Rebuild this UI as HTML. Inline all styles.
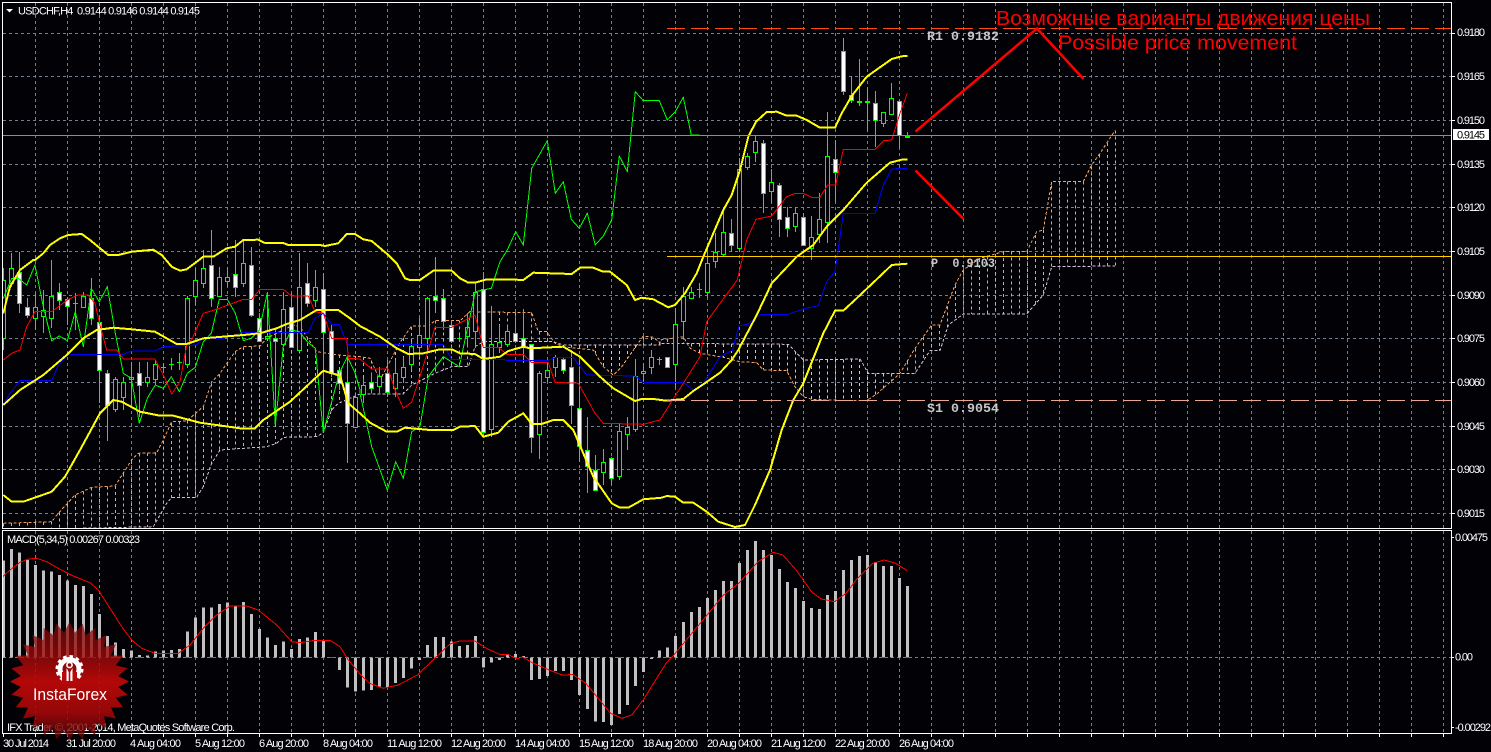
<!DOCTYPE html>
<html><head><meta charset="utf-8"><style>
html,body{margin:0;padding:0;background:#010106;width:1491px;height:752px;overflow:hidden}
svg{display:block}
text{font-family:"Liberation Sans",sans-serif;font-size:11px;fill:#fff}
.m{font-family:"Liberation Mono",monospace;font-size:12.5px;font-weight:bold;fill:#c8c8c8}
.r{font-size:20px;fill:#f00}
</style></head><body>
<svg id="s" xmlns="http://www.w3.org/2000/svg" width="1491" height="752" viewBox="0 0 1491 752">
<defs>
<clipPath id="cm"><rect x="3" y="3" width="1448" height="525"/></clipPath>
<clipPath id="cd"><rect x="3" y="531" width="1448" height="203"/></clipPath>
<linearGradient id="sg" x1="0" y1="0" x2="0" y2="1">
<stop offset="0" stop-color="#7a0808" stop-opacity=".72"/>
<stop offset=".3" stop-color="#a00a0a" stop-opacity=".8"/>
<stop offset=".5" stop-color="#c00808" stop-opacity=".93"/>
<stop offset=".75" stop-color="#a80808" stop-opacity=".9"/>
<stop offset="1" stop-color="#5e0606" stop-opacity=".72"/>
</linearGradient>
</defs>
<rect width="1491" height="752" fill="#010106"/>
<g id="grid" shape-rendering="crispEdges"></g>
<g id="main" clip-path="url(#cm)" shape-rendering="crispEdges"></g>
<g id="macd" clip-path="url(#cd)" shape-rendering="crispEdges"></g>
<g fill="none" stroke="#fff" shape-rendering="crispEdges">
<rect x="2.5" y="2.5" width="1449" height="526"/>
<rect x="2.5" y="530.5" width="1449" height="203"/>
</g>
<g id="ticks" shape-rendering="crispEdges" stroke="#fff"></g>

<polygon points="6,9 13,9 9.5,12.5" fill="#fff"/>
<text x="18" y="14.5" textLength="182" xml:space="preserve">USDCHF,H4  0.9144 0.9146 0.9144 0.9145</text>
<text x="7" y="543" textLength="133">MACD(5,34,5) 0.00267 0.00323</text>
<text x="7" y="731" textLength="228">IFX Trader, ©, 2001-2014, MetaQuotes Software Corp.</text>

<g id="seal"></g>
<g>
<circle cx="69.5" cy="669" r="9.5" fill="none" stroke="#fff" stroke-width="5"/>
<circle cx="69.5" cy="669" r="12.5" fill="none" stroke="#fff" stroke-width="3" stroke-dasharray="3.5 3"/>
<rect x="62" y="672" width="15" height="12" fill="#b80808"/>
<circle cx="69.5" cy="665" r="2.6" fill="none" stroke="#fff" stroke-width="1.6"/>
<path d="M66.5 668v13h2.2v-9zM72.5 668v13h-2.2v-9z" fill="#fff"/>
<text x="33" y="700" style="font-size:16.5px" textLength="74" lengthAdjust="spacingAndGlyphs">InstaForex</text>
</g>

<text x="1457" y="36" textLength="28">0.9180</text>
<text x="1457" y="80" textLength="28">0.9165</text>
<text x="1457" y="124" textLength="28">0.9150</text>
<text x="1457" y="168" textLength="28">0.9135</text>
<text x="1457" y="211" textLength="28">0.9120</text>
<text x="1457" y="255" textLength="28">0.9105</text>
<text x="1457" y="299" textLength="28">0.9090</text>
<text x="1457" y="342" textLength="28">0.9075</text>
<text x="1457" y="386" textLength="28">0.9060</text>
<text x="1457" y="430" textLength="28">0.9045</text>
<text x="1457" y="473" textLength="28">0.9030</text>
<text x="1457" y="517" textLength="28">0.9015</text>
<rect x="1453" y="129" width="36" height="11" fill="#fff"/>
<text x="1457" y="138.5" textLength="28" style="fill:#000">0.9145</text>
<text x="1455" y="541" textLength="33">0.00475</text>
<text x="1455" y="660.5" textLength="18">0.00</text>
<text x="1455" y="731" textLength="36">-0.00292</text>

<text x="3" y="747" textLength="46">30 Jul 2014</text>
<text x="66" y="747" textLength="50">31 Jul 20:00</text>
<text x="130" y="747" textLength="51">4 Aug 04:00</text>
<text x="195" y="747" textLength="50">5 Aug 12:00</text>
<text x="259" y="747" textLength="50">6 Aug 20:00</text>
<text x="323" y="747" textLength="50">8 Aug 04:00</text>
<text x="387" y="747" textLength="55">11 Aug 12:00</text>
<text x="451" y="747" textLength="55">12 Aug 20:00</text>
<text x="515" y="747" textLength="55">14 Aug 04:00</text>
<text x="579" y="747" textLength="55">15 Aug 12:00</text>
<text x="643" y="747" textLength="55">18 Aug 20:00</text>
<text x="707" y="747" textLength="55">20 Aug 04:00</text>
<text x="771" y="747" textLength="55">21 Aug 12:00</text>
<text x="835" y="747" textLength="55">22 Aug 20:00</text>
<text x="899" y="747" textLength="55">26 Aug 04:00</text>

<text class="m" x="927" y="40" textLength="72" lengthAdjust="spacingAndGlyphs" xml:space="preserve">R1 0.9182</text>
<text class="m" x="931" y="267" textLength="64" lengthAdjust="spacingAndGlyphs" xml:space="preserve">P  0.9103</text>
<text class="m" x="927" y="412" textLength="72" lengthAdjust="spacingAndGlyphs" xml:space="preserve">S1 0.9054</text>
<text class="r" x="996" y="25" textLength="374" lengthAdjust="spacingAndGlyphs">Возможные варианты движения цены</text>
<text class="r" x="1058" y="49.5" textLength="239" lengthAdjust="spacingAndGlyphs">Possible price movement</text>
<g fill="none" stroke="#f00" stroke-width="2.5">
<polyline points="915.5,131.5 1037,28.5 1083.5,79"/>
<line x1="915.5" y1="170.5" x2="963.5" y2="219"/>
</g>
</svg>
<script>
(function(){
var NS="http://www.w3.org/2000/svg";
function el(p,n,a){var e=document.createElementNS(NS,n);for(var k in a)e.setAttribute(k,a[k]);document.getElementById(p).appendChild(e);return e}
var GC="#708090",GD="3 3";
// grid
var i,k,x,y;
[33,76,120,164,207,251,295,338,382,426,469,513].forEach(function(y){
 el("grid","line",{x1:3,x2:1451,y1:y+.5,y2:y+.5,stroke:GC,"stroke-dasharray":GD});
 el("ticks","line",{x1:1452,x2:1455,y1:y+.5,y2:y+.5});
});
for(x=35;x<=1443;x+=32){
 el("grid","line",{x1:x+.5,x2:x+.5,y1:3,y2:528,stroke:GC,"stroke-dasharray":GD});
 el("grid","line",{x1:x+.5,x2:x+.5,y1:531,y2:733,stroke:GC,"stroke-dasharray":GD});
}
el("grid","line",{x1:3,x2:1451,y1:657.5,y2:657.5,stroke:GC,"stroke-dasharray":GD});
[537,657,727].forEach(function(y){el("ticks","line",{x1:1452,x2:1454,y1:y+.5,y2:y+.5})});
for(x=3;x<=1443;x+=32){el("ticks","line",{x1:x+.5,x2:x+.5,y1:734,y2:737})}

function Z(x0,y0,sx,a){var r=[];for(var i=0;i<a.length;i+=2)r.push([x0+a[i]/sx,y0+a[i+1]/3]);return r}
function PL(p,pts,c,w,d){var o={points:pts.map(function(q){return q[0].toFixed(1)+","+q[1].toFixed(1)}).join(" "),fill:"none",stroke:c,"stroke-width":w||1};if(d)o["stroke-dasharray"]=d;return el(p,"polyline",o)}
function itp(P,x){for(var i=1;i<P.length;i++){if(x<=P[i][0]){var a=P[i-1],b=P[i];if(b[0]==a[0])return b[1];return a[1]+(b[1]-a[1])*(x-a[0])/(b[0]-a[0])}}return null}

// Ichimoku
var A=[].concat(
Z(0,250,3,[10,820,155,815,175,790,225,735,275,712,345,708,395,630,415,610,470,608,490,570,515,515,560,513,610,470,635,395,660,370,705,305,730,290,780,288,800,265,880,225,900,230,950,305,1018,315,1080,320]),
Z(360,250,3,[30,325,60,390,100,315,125,270,155,228,205,228,225,212,300,212,330,185,515,188,535,245,560,245,585,280,610,290,650,295,700,300,730,350,760,375,785,350,850,258,880,262,900,278]),
Z(660,240,3,[0,300,70,290,90,325,120,340,190,352,240,365,290,368,310,390,380,392,405,440,430,470,455,478,570,482,620,482,650,462,720,400,765,325,790,290,815,255,840,255,885,135,910,90,960,55,1030,35]),
Z(660,10,3,[1100,725,1130,665,1150,660,1175,515,1270,515,1295,465,1320,430,1365,362]));
var B=[].concat(
Z(0,250,3,[10,840,460,830,500,760,515,742,590,742,610,710,635,640,660,600,800,590,830,580,850,562,950,560,970,548,995,480,1015,460,1080,432]),
Z(360,250,3,[130,432,155,405,205,380,225,370,275,350,325,350,345,290,370,275,580,275,610,285,900,285]),
Z(660,240,3,[0,310,385,313,430,360,600,357,625,400,765,400,810,332,840,332,865,255,910,222,1100,222,1150,165,1175,80,1365,78]));
for(x=3;x<=1115;x+=8){
 var ya=itp(A,x),yb=itp(B,x);if(ya==null||yb==null)continue;
 var c=ya<yb?"#f4a460":"#d8bfd8";
 el("main","line",{x1:x+.5,x2:x+.5,y1:Math.min(ya,yb),y2:Math.max(ya,yb),stroke:c,"stroke-dasharray":"3 3"});
}
PL("main",A,"#f4a460",1,"3 2");
PL("main",B,"#d8bfd8",1,"3 2");

// Candles [hi,lo,top,bot,white]
var Cs=[
[250,0,[[55,300,90,265,0],[10,110,55,100,0],[5,190,65,160,1],[145,205,170,195,1],[130,240,170,205,0],[120,250,180,197,0],[30,235,137,205,0],[98,180,127,150,1],[140,225,147,168,1],[130,240,160,160,0],[125,170,137,170,0],[85,225,145,205,1],[205,460,215,360,1],[360,572,370,465,1],[380,485,388,478,0],[380,480,397,442,0],[335,470,380,387,0],[335,500,370,405,1],[335,410,380,397,0],[330,405,343,388,0],[340,370,352,352,0],[325,360,343,343,0],[310,360,337,337,0],[137,355,145,343,0],[55,165,90,137,0],[0,115,55,100,0],[-60,170,46,145,1],[50,140,82,137,0],[50,110,82,92,0],[-30,140,73,110,1],[-30,110,40,100,0],[-10,200,46,195,1],[190,275,205,273,1],[125,265,258,263,0],[235,525,265,273,1],[125,290,178,283,0],[130,295,170,292,1],[10,305,110,300,0],[40,170,100,160,1],[60,170,110,150,0],[70,545,118,247,1],[225,380,242,370,1],[360,420,360,400,1],[320,640,397,520,1],[430,530,442,530,0]]],
[250,45,[[385,460,405,432,0],[370,430,397,415,1],[350,430,378,407,0],[330,440,370,425,1],[330,440,370,415,0],[320,400,352,380,0],[275,360,288,343,0],[205,320,255,290,0],[140,310,145,265,0],[22,190,137,150,1],[118,240,145,212,1],[210,280,225,273,1],[255,275,265,265,0],[190,290,232,257,0],[100,295,127,242,0],[65,560,118,545,1],[168,562,283,538,0],[225,310,275,292,0],[225,290,242,283,0],[205,280,248,273,1],[178,338,265,290,1],[285,608,283,562,1],[362,626,370,553,0],[340,395,360,380,0],[315,380,320,352,0],[320,372,328,360,1],[300,522,352,465,1],[330,635,475,588,1],[500,730,600,648,1],[615,720,660,720,1],[598,705,635,667,0],[620,705,625,685,1],[520,690,543,677,0],[500,600,530,553,0],[328,545,378,538,0],[340,395,362,370,0],[300,372,320,352,0],[320,345,328,328,0],[320,355,320,352,1],[175,415,223,343,0],[110,265,137,213,0],[110,145,127,145,0],[100,145,118,118,0],[-20,145,40,127,0]]],
[10,89,[[670,775,725,752,0],[590,740,665,733,0],[628,725,670,705,1],[445,725,478,715,0],[430,480,437,472,0],[375,455,392,427,0],[390,610,400,550,1],[478,580,515,542,0],[520,680,525,627,1],[592,680,620,655,1],[590,665,610,647,0],[608,705,620,705,1],[618,750,680,715,0],[548,700,628,672,0],[305,698,437,637,0],[390,575,447,487,1],[85,255,122,243,1],[198,278,255,270,1],[148,288,272,276,0],[230,362,272,276,0],[243,410,278,330,1],[305,350,305,340,0],[218,315,263,313,0],[270,415,272,375,1],[366,382,378,382,0]]]
];
Cs.forEach(function(G){
 var y0=G[0];
 G[2].forEach(function(c,i){
  var k=G[1]+i,x=3+8*k,hi=Math.round(y0+c[0]/3),lo=Math.round(y0+c[1]/3),t=Math.round(y0+c[2]/3),b=Math.round(y0+c[3]/3);
  el("main","line",{x1:x+.5,x2:x+.5,y1:hi,y2:lo,stroke:"#0f0"});
  if(b-t<1){el("main","line",{x1:x-2,x2:x+3,y1:t+.5,y2:t+.5,stroke:"#0f0"})}
  else el("main","rect",{x:x-1.5,y:t+.5,width:4,height:b-t,fill:c[4]?"#fff":"#010106",stroke:"#0f0"});
 });
});

// Chikou
PL("main",[].concat(
Z(0,250,3,[10,145,35,85,55,85,80,105,105,45,130,170,155,272,178,258,202,272,226,185,250,290,274,115,298,155,322,110,346,250,370,370,394,385,418,520,442,445,466,405,490,415,514,380,538,425,562,370,586,352,610,275,634,250,658,148,682,148,706,190,730,272,754,265,778,240,802,128,826,525,850,290,874,240,898,245,922,275,946,295,970,548,994,460,1018,370,1042,320,1066,370,1080,420]),
Z(360,250,3,[0,430,35,590,82,720,107,635,130,685,155,545,180,530,205,380,250,320,298,350,346,125,394,115]),
Z(480,80,3,[52,570,60,545,82,510,107,455,130,495,155,265,202,182,226,340,250,305,274,418,298,445,322,400,346,495,370,468,395,420,418,228,442,275,466,35,490,62,538,62,562,120,586,95,610,52,634,165,658,165])
),"#0f0");

// Kijun
PL("main",[].concat(
Z(0,250,3,[10,465,30,430,60,392,155,392,175,345,205,313,370,313,395,303,465,303,490,290,590,285,610,265,670,265,730,247,925,247,945,205,970,190,995,223,1018,223,1042,283,1080,283]),
Z(360,250,3,[250,283,275,328,430,328,440,331,565,331,585,323,640,323,680,375,825,378,850,397,970,397,1000,420,1030,400,1080,320]),
Z(660,240,3,[218,330,237,258,265,252,300,223,385,223,430,207,475,197,500,125,525,95]),
Z(660,10,3,[550,610,645,610,670,525,695,478,720,475,742,475])
),"#00f");

// Tenkan
PL("main",[].concat(
Z(0,250,3,[10,330,35,310,60,300,80,230,105,185,155,185,205,148,235,135,265,135,285,160,300,225,320,300,350,300,370,327,465,327,495,385,515,432,540,395,560,285,575,270,610,190,650,178,730,148,755,148,780,118,850,118,875,138,925,138,945,185,970,190,995,265,1040,265,1045,325,1080,327]),
Z(360,250,3,[35,357,85,357,105,420,130,475,155,457,205,300,225,232,275,232,345,195,370,292,415,292,440,313,490,313,515,338,565,338,585,397,655,400,705,490,730,520,850,523,900,510,970,400,1020,320,1040,215,1080,160]),
Z(660,10,3,[232,810,260,690,288,628,335,618,380,560,405,550,430,550,455,562,480,562,503,525,527,525,550,418,645,418,672,392,695,390,720,310,742,250])
),"#f00");

// Bands
var YW="#ff0";
PL("main",[].concat(
Z(0,250,3,[10,190,30,110,60,60,100,30]),
Z(0,0,3,[105,780,130,760,150,735,180,715,205,705,245,702,270,720,300,745,325,765,355,765,395,755,460,749,485,765,515,800,540,812,560,808,610,770,640,770,680,745,705,740,730,720,775,719,795,729,850,729,865,735,960,735,975,738,1015,730,1040,702,1065,702,1090,718,1115,723,1165,765,1190,790]),
Z(360,250,3,[135,85,150,90,180,90,220,62,275,62,300,85,325,98,345,98,380,88,440,88,490,90,520,68,635,72,660,53,700,53,730,65,750,65,800,105,825,150,845,143,880,148,925,172,945,165,975,130,1010,70]),
Z(660,10,3,[130,740,190,600,215,555,240,480,265,380,288,335,320,306,350,305,380,317,410,317,440,330,480,353,525,353,545,310,575,258,620,200,660,172,695,147,725,139,742,138])
),YW,2);
PL("main",[].concat(
Z(0,250,3,[10,465,60,420,130,375,200,315,250,265,290,240,340,233,395,238,465,245,530,282,560,282,610,265,730,255,780,250,830,235,860,222,900,210,950,180,1015,180,1050,205,1080,228]),
Z(360,250,3,[60,260,110,295,145,312,190,310,240,298,275,298,300,310,345,312,370,327,420,320,445,303,490,290,510,295,610,290,660,320,720,380,760,415,825,453,845,447,880,447,920,452,970,447,1000,423,1030,403,1080,368]),
Z(660,240,3,[215,360,235,330,290,225,335,130,410,50]),
Z(660,10,3,[460,705,500,650,550,600,620,518,690,458,725,449,742,449])
),YW,2);
PL("main",[].concat(
Z(0,250,3,[10,735,35,755,70,755,155,725,195,680,240,600,300,490,340,450,365,455,420,485,480,497,520,497,600,518,720,535,765,535,790,510,870,455,970,362,1020,377,1045,460,1080,490]),
Z(360,250,3,[30,518,80,545,110,545,135,533,210,540,280,540,300,530,345,528,370,560,415,548,445,515,490,490,515,522,545,522,580,510,610,510,640,540,700,680,755,760,780,773,805,773,850,748,905,743,920,738,945,740,970,758,1000,758,1040,785,1075,815]),
[[735,527],[745,525],[755,505],[770,470]],
Z(660,240,3,[365,570,400,480,430,430,490,280,525,212,550,212,590,175,650,118,695,75,742,71])
),YW,2);

// Levels
el("main","line",{x1:667,x2:1451,y1:28.5,y2:28.5,stroke:"#ff4a10","stroke-dasharray":"18 6"});
el("main","line",{x1:667,x2:1451,y1:256.5,y2:256.5,stroke:"#ffcc00"});
el("main","line",{x1:667,x2:1451,y1:400.5,y2:400.5,stroke:"#e9a58e","stroke-dasharray":"18 6"});
el("main","line",{x1:3,x2:1451,y1:135.5,y2:135.5,stroke:"#888e94"});

// MACD
var h=[92,57,68,90,105,122,125,135,152,165,168,192,252,318,338,357,362,375,377,365,362,360,357,305,263,232,233,222,218,228,216,252,297,323,345,335,357,327,322,306,332,384,420,473,485,482,480,470,472,459,444,416,390,345,321,321,335,348,345,318,412,398,390,372,372,378,450,447,438,423,423,450,495,537,575,576,585,552,525,468,426,387,362,353,318,276,246,231,204,180,153,153,99,60,33,60,75,117,156,174,213,234,237,195,183,120,90,78,75,96,108,108,144,168];
h.forEach(function(v,k){
 var x=2+8*k,Y=530+v/3,zero=657.5,t=Math.min(Y,zero),b=Math.max(Y,zero);
 el("macd","rect",{x:x,y:t,width:3,height:b-t,fill:"#c0c0c0"});
});
PL("macd",[].concat(
Z(0,530,3,[8,140,30,120,60,97,85,87,110,85,140,95,180,118,220,138,270,158,295,180,330,235,365,290,395,330,425,355,465,370,535,370,570,345,610,295,650,255,690,228,740,228,775,240,830,285,875,335,900,338,945,331,990,331,1020,350,1045,390,1080,432]),
Z(360,530,2.6133,[25,460,60,475,100,465,150,435,200,380,235,342,260,333,300,333,335,358,365,373,385,373,410,386,425,381,450,398,490,418,530,436,555,433,590,460,655,550,685,565,710,555,740,510,800,400,820,375,900,265,950,195,990,160,1040,95,1080,67,1105,75,1140,120,1180,185,1205,207,1240,215,1270,190,1300,145,1340,100,1370,90,1400,100,1430,122])
),"#f00");

// Seal
var n=28,cx=69.5,cy=681.5,R=59.5,r=49,p=[];
for(i=0;i<n*2;i++){var a=-Math.PI/2+i*Math.PI/n,q=i%2?r:R;p.push((cx+q*Math.cos(a)).toFixed(1)+","+(cy+q*Math.sin(a)).toFixed(1))}
el("seal","polygon",{points:p.join(" "),fill:"url(#sg)"});
})();
</script>
</body></html>
